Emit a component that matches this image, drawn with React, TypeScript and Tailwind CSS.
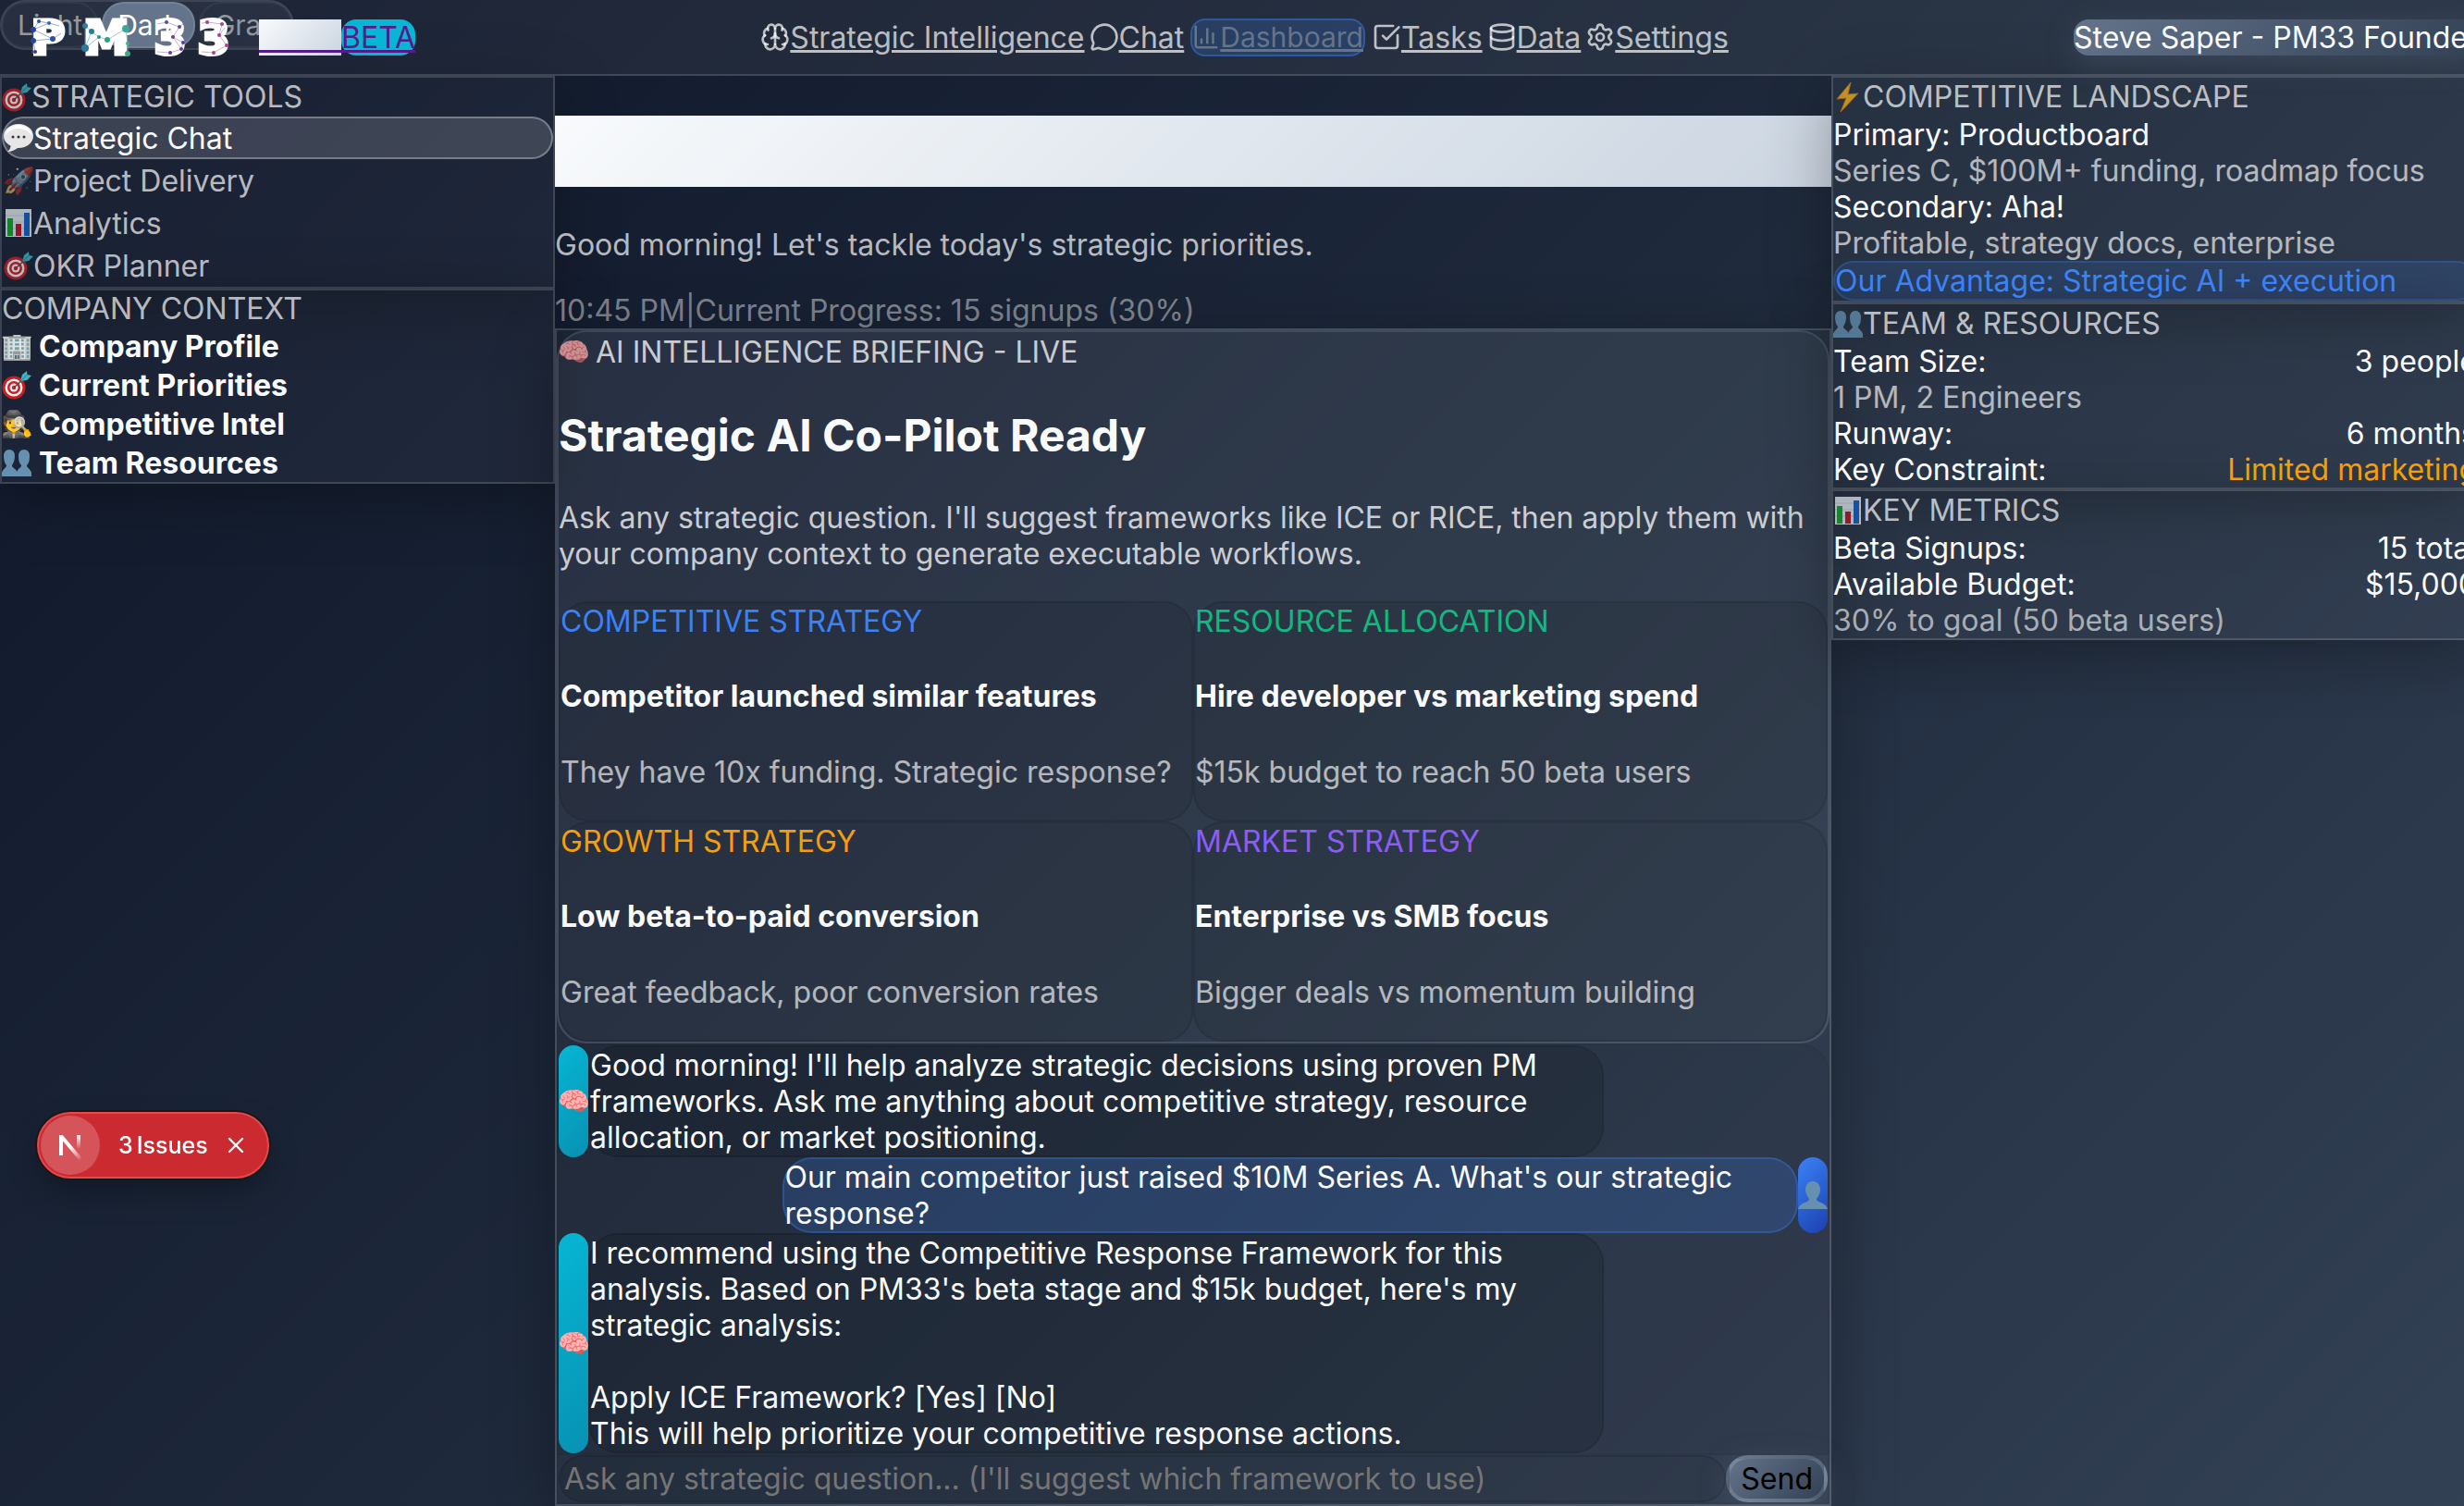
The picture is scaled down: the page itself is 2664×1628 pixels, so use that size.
import React from 'react';
import { Brain, MessageCircle, ChartColumn, SquareCheckBig, Database, Settings, X } from 'lucide-react';

const font = 'font-[Inter,sans-serif]';
const glass = 'border-2 border-white/15 bg-white/4 shadow-[0_16px_64px_rgba(0,0,0,0.3)]';

const drawn: Record<string, React.ReactNode> = {
  target: (
    <>
      <circle cx="13" cy="19" r="12.500" fill="#c81e24" />
      <circle cx="13" cy="19" r="9.500" fill="#f4f1f1" />
      <circle cx="13" cy="19" r="7" fill="#c81e24" />
      <circle cx="13" cy="19" r="4.500" fill="#f4f1f1" />
      <circle cx="13" cy="19" r="2.200" fill="#c81e24" />
      <path d="M13 19L24 9" stroke="#5c4a3a" strokeWidth="1.600" />
      <path d="M20 12L22 5L27 1L27.500 5L32 6L27 11Z" fill="#3fb4c0" />
      <path d="M20 12L27.500 5" stroke="#1f7f8c" strokeWidth="1" />
    </>
  ),
  bubble: (
    <>
      <path d="M16 1C7.500 1 0 6.500 0 14C0 19 3.500 22.500 7.500 24.500C7.500 27.500 6 29.500 4 31C8.500 31 12.500 29 15 27C24.500 27.500 32 21.500 32 14C32 6.500 24.500 1 16 1Z" fill="#e6e6e6" />
      <path d="M16 2C9 2 2 7 2 13C6 8 11 6 16 6C21 6 26 8 30 13C30 7 23 2 16 2Z" fill="#fff" />
      <circle cx="10" cy="15" r="1.500" fill="#333" />
      <circle cx="16" cy="15" r="1.500" fill="#333" />
      <circle cx="22" cy="15" r="1.500" fill="#333" />
    </>
  ),
  chart: (
    <>
      <rect x="2" y="1" width="28" height="30" fill="#dfe5ea" />
      <path d="M2 8H30M2 15H30M2 22H30" stroke="#b9c6d0" strokeWidth="0.800" />
      <rect x="4" y="11" width="6" height="19" fill="#12a52a" />
      <rect x="13" y="17" width="6" height="13" fill="#b81420" />
      <rect x="22" y="5" width="6" height="25" fill="#1160c4" />
    </>
  ),
  bolt: <path d="M19 0L4 18L14 17L8 32L27 12L16 13Z" fill="#f7b21d" stroke="#c47c10" strokeWidth="1" />,
  team: (
    <g fill="#6590b0">
      <path d="M8 2C12 2 14 5 14 9C14 14 12 17 11 19C11 22 15 22 17 27V31H0V27C1 23 5 22 5 19C3 17 2 13 2 9C2 5 4 2 8 2Z" />
      <path d="M24 2C28 2 30 5 30 9C30 14 29 17 27 19C27 22 31 23 32 27V31H16V27C17 22 21 22 21 19C19 17 18 14 18 9C18 5 20 2 24 2Z" />
    </g>
  ),
  person: (
    <path d="M16 1C21 1 24 5 24 10C24 14 22 17 20 20C19 24 30 23 32 31H0C2 23 13 24 12 20C10 17 8 14 8 10C8 5 11 1 16 1Z" fill="#6590b0" />
  ),
};

function Emoji({ children }: { children: string }) {
  return (
    <span aria-hidden="true" className="inline-flex w-8 shrink-0 items-center justify-center text-[28px]">
      {drawn[children] ? (
        <svg viewBox="0 0 32 32" className="size-8 shrink-0">
          {drawn[children]}
        </svg>
      ) : (
        children
      )}
    </span>
  );
}

function Logo() {
  const dots: [number, number, string, number][] = [
    [42, 23, '#2b4fa8', 2], [53, 25, '#2b6fa8', 2], [36, 32, '#2b3fa0', 3], [36, 44, '#2348a0', 3], [57, 42, '#2b4fa8', 3],
    [38, 56, '#2b3fa0', 2], [92, 28, '#2b7fa0', 3], [99, 34, '#2b7a98', 3], [92, 52, '#2b7a98', 4], [107, 40, '#2f8f98', 2],
    [116, 43, '#2f9f90', 3], [136, 31, '#3fa894', 4], [138, 47, '#3fb08c', 2], [138, 58, '#3fa880', 3],
    [180, 24, '#5a4a98', 2], [194, 29, '#5a4a98', 2], [187, 40, '#6a3a98', 2], [198, 46, '#5a3a98', 2], [196, 53, '#6a3a98', 2], [184, 57, '#6a3a98', 2],
    [224, 24, '#a040a0', 2], [240, 26, '#a040a0', 2], [237, 38, '#a83a98', 2], [245, 49, '#b03a98', 2], [231, 57, '#b03a90', 2],
  ];
  const lines = [
    'M42 23L53 25L36 32L36 44L38 56M36 44L57 42L66 36M42 23L36 32L57 42M53 25L64 28M36 44L35 58',
    'M92 28L99 34L92 52L107 40L116 43L136 31L138 47L138 58M92 28L92 52M99 34L107 40M136 31L138 24',
    'M170 26L180 24L194 29L187 40L198 46L196 53L184 57L170 56M187 40L196 53M194 29L198 26M218 25L224 24L240 26L237 38L245 49L231 57L218 56M237 38L243 30',
  ];
  return (
    <svg role="img" aria-label="PM 33 logo" viewBox="0 0 280 80" className="h-20 w-70 shrink-0">
      <g fill="#fff" stroke="#fff" strokeWidth="5" fontFamily="'DejaVu Sans'" fontWeight="700" fontSize="49" textAnchor="middle">
        <text x="52" y="58">P</text>
        <text x="115" y="58">M</text>
        <text x="184" y="58">3</text>
        <text x="231" y="58">3</text>
      </g>
      <g fill="none" strokeWidth="0.700">
        <path d={lines[0]} stroke="#6f86b8" />
        <path d={lines[1]} stroke="#7fb0b0" />
        <path d={lines[2]} stroke="#a890b8" />
      </g>
      {dots.map(([x, y, c, r]) => (
        <circle key={`${x}-${y}`} cx={x} cy={y} r={r} fill={c} />
      ))}
    </svg>
  );
}

const nav = [
  { label: 'Strategic Intelligence', Icon: Brain },
  { label: 'Chat', Icon: MessageCircle },
  { label: 'Dashboard', Icon: ChartColumn, active: true },
  { label: 'Tasks', Icon: SquareCheckBig },
  { label: 'Data', Icon: Database },
  { label: 'Settings', Icon: Settings },
];

function Header() {
  return (
    <header className="relative flex h-[82px] items-center justify-between border-b-2 border-white/15 bg-white/5">
      <div className="absolute top-0 left-0 flex gap-1 rounded-[32px] border-2 border-white/10 bg-white/5 text-[30px] text-white/50">
        <button className="h-[50px] rounded-3xl border-2 border-white/5 px-[15px]">Light</button>
        <button className="h-[50px] rounded-3xl border-2 border-white/10 bg-[#64748b] px-[15px] text-white">Dark</button>
        <button className="h-[50px] rounded-3xl border-2 border-white/5 px-[15px]">Gray</button>
      </div>
      <a href="#home" aria-label="PM33 home" className="relative flex items-center text-[#551a8b]">
        <Logo />
        <span className="relative h-[39px] w-[89px] bg-linear-135 from-[#f8fafc] to-[#cbd5e1] after:absolute after:inset-x-0 after:top-[33px] after:h-[3px] after:bg-[#551a8b]" />
        <span className="rounded-2xl bg-[#06b6d4] underline decoration-[3px]">BETA</span>
      </a>
      <nav className="flex items-center gap-px">
        {nav.map(({ label, Icon, active }) => (
          <a
            key={label}
            href={`#${label}`}
            className={
              active
                ? 'mx-1 flex items-center rounded-2xl border-2 border-[#3b82f6]/40 bg-[#3b82f6]/20 text-[30px] leading-[37px] text-[#64748b] underline decoration-[3px]'
                : 'flex items-center border-2 border-transparent text-white/70 underline decoration-[3px]'
            }
          >
            <Icon className={active ? 'size-[30px]' : 'size-8'} strokeWidth={2} />
            {label}
          </a>
        ))}
      </nav>
      <div className="rounded-2xl bg-linear-135 from-[#64748b] to-[#334155] text-[#f8fafc] shadow-[0_8px_32px_rgba(100,116,139,0.3)]">
        Steve Saper - PM33 Founder
      </div>
    </header>
  );
}

const tools = [
  ['bubble', 'Strategic Chat'],
  ['🚀', 'Project Delivery'],
  ['chart', 'Analytics'],
  ['target', 'OKR Planner'],
];
const context = [
  ['🏢', 'Company Profile'],
  ['target', 'Current Priorities'],
  ['🕵️', 'Competitive Intel'],
  ['team', 'Team Resources'],
];

function PanelTitle({ icon, children }: { icon?: string; children: React.ReactNode }) {
  return (
    <h3 className={icon ? 'flex h-[42px] items-center leading-[44px] text-white/70' : 'text-white/70'}>
      {icon && (
        <span className="flex opacity-75">
          <Emoji>{icon}</Emoji>
        </span>
      )}
      <span>{children}</span>
    </h3>
  );
}

function LeftSidebar() {
  return (
    <aside>
      <section className={glass}>
        <PanelTitle icon="target">STRATEGIC TOOLS</PanelTitle>
        {tools.map(([icon, label], i) => (
          <button
            key={label}
            className={
              i === 0
                ? 'flex h-[46px] w-full items-center rounded-3xl border-2 border-white/30 bg-white/15 text-[#f8fafc]'
                : 'flex h-[46px] w-full items-center border-2 border-transparent text-white/70'
            }
          >
            <span className={i === 0 ? 'flex' : 'flex opacity-75'}>
              <Emoji>{icon}</Emoji>
            </span>
            {label}
          </button>
        ))}
      </section>
      <section className={glass}>
        <PanelTitle>COMPANY CONTEXT</PanelTitle>
        {context.map(([icon, label]) => (
          <h4 key={label} className="flex h-[42px] items-center gap-2 font-bold text-[#f8fafc]">
            <Emoji>{icon}</Emoji>
            {label}
          </h4>
        ))}
      </section>
    </aside>
  );
}

function Row({ label, value, warn }: { label: string; value: string; warn?: boolean }) {
  return (
    <div className="flex justify-between text-[#f8fafc]">
      <span>{label}</span>
      <span className={warn ? 'text-[#f59e0b]' : ''}>{value}</span>
    </div>
  );
}

function RightSidebar() {
  return (
    <aside>
      <section className={glass}>
        <PanelTitle icon="bolt">COMPETITIVE LANDSCAPE</PanelTitle>
        <p className="text-[#f8fafc]">Primary: Productboard</p>
        <p className="text-white/65">Series C, $100M+ funding, roadmap focus</p>
        <p className="text-[#f8fafc]">Secondary: Aha!</p>
        <p className="text-white/65">Profitable, strategy docs, enterprise</p>
        <p className="rounded-3xl border-2 border-[#3b82f6]/25 bg-[#3b82f6]/15 text-[#3b82f6]">Our Advantage: Strategic AI + execution</p>
      </section>
      <section className={glass}>
        <PanelTitle icon="team">TEAM &amp; RESOURCES</PanelTitle>
        <Row label="Team Size:" value="3 people" />
        <p className="text-white/65">1 PM, 2 Engineers</p>
        <Row label="Runway:" value="6 months" />
        <Row label="Key Constraint:" value="Limited marketing" warn />
      </section>
      <section className={glass}>
        <PanelTitle icon="chart">KEY METRICS</PanelTitle>
        <Row label="Beta Signups:" value="15 total" />
        <Row label="Available Budget:" value="$15,000" />
        <p className="text-white/60">30% to goal (50 beta users)</p>
      </section>
    </aside>
  );
}

const cards = [
  { tag: 'COMPETITIVE STRATEGY', color: 'text-[#3b82f6]', title: 'Competitor launched similar features', text: 'They have 10x funding. Strategic response?' },
  { tag: 'RESOURCE ALLOCATION', color: 'text-[#10b981]', title: 'Hire developer vs marketing spend', text: '$15k budget to reach 50 beta users' },
  { tag: 'GROWTH STRATEGY', color: 'text-[#f59e0b]', title: 'Low beta-to-paid conversion', text: 'Great feedback, poor conversion rates' },
  { tag: 'MARKET STRATEGY', color: 'text-[#8b5cf6]', title: 'Enterprise vs SMB focus', text: 'Bigger deals vs momentum building' },
];

function AiMessage({ children }: { children: React.ReactNode }) {
  return (
    <div className="flex">
      <div className="flex w-8 shrink-0 items-center justify-center rounded-full bg-linear-135 from-[#06b6d4] to-[#0891b2]">
        <Emoji>🧠</Emoji>
      </div>
      <div className="max-w-4/5 rounded-[32px] border-2 border-black/10 bg-black/12 whitespace-pre-line text-[#f8fafc]">{children}</div>
    </div>
  );
}

function Main() {
  return (
    <main className="flex min-w-0 flex-col">
      <h1 aria-label="Strategic dashboard" className="my-[43px] h-[77px] bg-linear-135 from-[#f8fafc] to-[#cbd5e1]" />
      <p className="mb-8 text-white/70">Good morning! Let's tackle today's strategic priorities.</p>
      <div className="flex text-white/45">
        <span>10:45 PM</span>
        <span>|</span>
        <span>Current Progress: 15 signups (30%)</span>
      </div>
      <div className={glass}>
        <section className="rounded-[32px] border-2 border-[#94a3b8]/20 bg-[#94a3b8]/8">
          <p className="flex h-[42px] items-center gap-2 text-white/75">
            <Emoji>🧠</Emoji>AI INTELLIGENCE BRIEFING - LIVE
          </p>
          <h2 className="mt-[41px] mb-10 text-5xl leading-[58px] font-bold text-[#f8fafc]">Strategic AI Co-Pilot Ready</h2>
          <p className="mb-8 text-white/75">
            Ask any strategic question. I'll suggest frameworks like ICE or RICE, then apply them with your company context to generate executable workflows.
          </p>
          <div className="grid grid-cols-2">
            {cards.map((c) => (
              <article key={c.tag} className="rounded-[32px] border-2 border-black/10 bg-black/8 pb-8">
                <p className={c.color}>{c.tag}</p>
                <h4 className="mt-[42px] mb-[43px] font-bold text-[#f8fafc]">{c.title}</h4>
                <p className="text-white/65">{c.text}</p>
              </article>
            ))}
          </div>
        </section>
        <section className="rounded-t-[32px] border-2 border-black/5 bg-black/5">
          <AiMessage>
            Good morning! I'll help analyze strategic decisions using proven PM frameworks. Ask me anything about competitive strategy, resource allocation, or market positioning.
          </AiMessage>
          <div className="flex justify-end">
            <div className="max-w-4/5 rounded-[32px] border-2 border-[#3b82f6]/30 bg-[#3b82f6]/20 text-[#f8fafc]">
              Our main competitor just raised $10M Series A. What's our strategic response?
            </div>
            <div className="flex w-8 shrink-0 items-center justify-center rounded-full bg-linear-135 from-[#3b82f6] to-[#1e40af]">
              <Emoji>person</Emoji>
            </div>
          </div>
          <AiMessage>
            {"I recommend using the Competitive Response Framework for this analysis. Based on PM33's beta stage and $15k budget, here's my strategic analysis:\n\nApply ICE Framework? [Yes] [No]\nThis will help prioritize your competitive response actions."}
          </AiMessage>
        </section>
        <form className="flex border-2 border-t-0 border-black/5" onSubmit={(e) => e.preventDefault()}>
          <input
            aria-label="Ask a strategic question"
            placeholder="Ask any strategic question... (I'll suggest which framework to use)"
            className="h-[51px] min-w-0 flex-1 rounded-[32px] border-2 border-black/10 bg-black/8 px-1 text-[#f8fafc] placeholder:text-[#757575]"
          />
          <button className="h-[51px] rounded-3xl border-4 border-white/15 bg-linear-135 from-[#64748b] to-[#334155] px-3 text-black shadow-[0_8px_32px_rgba(100,116,139,0.3)]">
            Send
          </button>
        </form>
      </div>
    </main>
  );
}

function Issues() {
  return (
    <div className="fixed bottom-[354px] left-10 flex h-18 items-center rounded-full border-2 border-[#e5484d] bg-[#ca2a30] p-0.5 pr-5 text-[25px] font-medium text-white shadow-[0_0_0_2px_#171717,0_16px_32px_rgba(0,0,0,0.25)]">
      <button aria-label="Open developer tools" className="flex size-16 items-center justify-center rounded-full bg-white/20">
        <svg viewBox="0 0 40 40" className="size-10" fill="none" strokeWidth="4">
          <defs>
            <linearGradient id="fadeA" x1="20" y1="22" x2="32" y2="36" gradientUnits="userSpaceOnUse">
              <stop stopColor="#fff" />
              <stop offset="1" stopColor="#fff" stopOpacity="0" />
            </linearGradient>
            <linearGradient id="fadeB" x1="29" y1="9" x2="29" y2="24" gradientUnits="userSpaceOnUse">
              <stop stopColor="#fff" />
              <stop offset="1" stopColor="#fff" stopOpacity="0" />
            </linearGradient>
          </defs>
          <path d="M10 31V9" stroke="#fff" />
          <path d="M10 10L31 35" stroke="url(#fadeA)" />
          <rect x="27" y="9" width="4" height="15" fill="url(#fadeB)" />
        </svg>
      </button>
      <button className="ml-5 flex gap-1">
        <span>3</span>
        <span>Issues</span>
      </button>
      <button aria-label="Dismiss" className="ml-4">
        <X className="size-7" strokeWidth={2} />
      </button>
    </div>
  );
}

export default function App() {
  return (
    <div className={`${font} min-h-screen overflow-hidden bg-linear-135 from-[#0f172a] via-[#1e293b] to-[#334155] text-[32px] leading-[39px]`}>
      <div className="w-[calc(100%+16px)]">
        <Header />
        <div className="grid grid-cols-[600px_minmax(0,1fr)_700px] items-start">
          <LeftSidebar />
          <Main />
          <RightSidebar />
        </div>
      </div>
      <Issues />
    </div>
  );
}
